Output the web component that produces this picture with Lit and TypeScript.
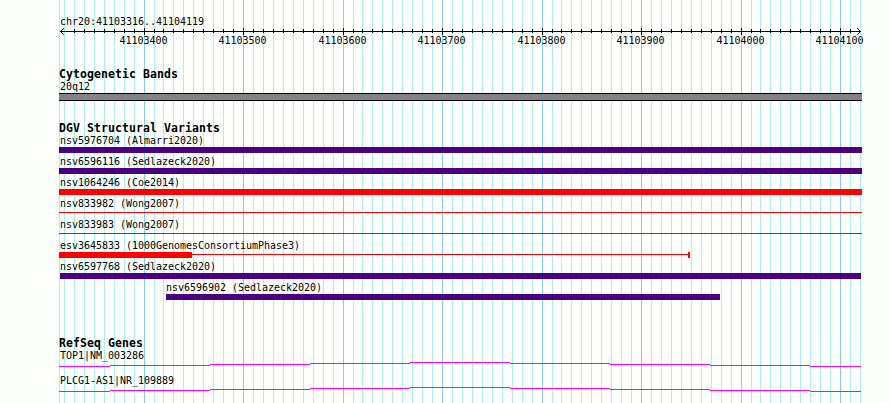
import { LitElement, html, svg, css, nothing } from "lit";
import { customElement, property } from "lit/decorators.js";
import { styleMap } from "lit/directives/style-map.js";

const LEFT = 59;
const WIDTH = 803;
const FIRST_TICK = 64.47;
const TICK_STEP = 9.95;

interface Tick {
  x: number;
  major: boolean;
  label: string;
}

interface Feature {
  name: string;
  start: number;
  end: number;
  kind: "gain" | "loss" | "line" | "partial";
}

const ticks: Tick[] = Array.from({ length: 81 }, (_, k) => {
  const position = 41103320 + k * 10;
  return {
    x: Math.floor(FIRST_TICK + TICK_STEP * k),
    major: position % 100 === 0,
    label: String(position),
  };
});

const variants: Feature[] = [
  { name: "nsv5976704 (Almarri2020)", start: 59, end: 862, kind: "gain" },
  { name: "nsv6596116 (Sedlazeck2020)", start: 59, end: 862, kind: "gain" },
  { name: "nsv1064246 (Coe2014)", start: 59, end: 862, kind: "loss" },
  { name: "nsv833982 (Wong2007)", start: 59, end: 862, kind: "line" },
  { name: "nsv833983 (Wong2007)", start: 59, end: 862, kind: "line" },
  { name: "esv3645833 (1000GenomesConsortiumPhase3)", start: 59, end: 690, kind: "partial" },
  { name: "nsv6597768 (Sedlazeck2020)", start: 60, end: 861, kind: "gain" },
  { name: "nsv6596902 (Sedlazeck2020)", start: 166, end: 720, kind: "gain" },
];

@customElement("genome-grid")
class GenomeGrid extends LitElement {
  static styles = css`
    :host { display: block; }
    svg { display: block; }
    .minor { fill: #afeeee; }
    .major { fill: #87ceeb; }
  `;
  render() {
    return html`<svg width="890" height="403" shape-rendering="crispEdges">
      <rect class="minor" x="59" y="0" width="1" height="403"></rect>
      ${ticks.map((t) => svg`<rect class=${t.major ? "major" : "minor"} x=${t.x} y="0" width="1" height="403"></rect>`)}
    </svg>`;
  }
}

@customElement("genome-ruler")
class GenomeRuler extends LitElement {
  static styles = css`
    :host { display: block; height: 22px; }
    svg { display: block; overflow: visible; }
    rect { fill: #000; }
    path { fill: none; stroke: #000; stroke-width: 1; }
    text { font: 10px "DejaVu Sans Mono", monospace; letter-spacing: -0.02px; fill: #000; }
  `;
  render() {
    return html`<svg width="803" height="22" viewBox="59 26 803 22">
      <g shape-rendering="crispEdges">
        <rect x="60" y="31" width="801" height="1"></rect>
        ${ticks.slice(0, 80).map((t) =>
          t.x < 70 ? nothing : svg`<rect x=${t.x} y=${t.major ? 28 : 29} width="1" height=${t.major ? 7 : 4}></rect>`)}
      </g>
      <path d="M63.8 28.2L60.5 31.5L63.8 34.8M857.2 28.2L860.5 31.5L857.2 34.8"></path>
      ${ticks.filter((t) => t.major).map((t) => svg`<text x=${t.x - 24.5} y="44">${t.label}</text>`)}
    </svg>`;
  }
}

@customElement("variant-row")
class VariantRow extends LitElement {
  @property({ attribute: false }) item!: Feature;
  static styles = css`
    :host { display: block; height: 21px; }
    .name { font: 10px/12px "DejaVu Sans Mono", monospace; letter-spacing: -0.02px; height: 12px; padding-left: 1px; white-space: pre; }
    .bar { height: 6px; display: flex; }
    .gain { background: #4b0082; }
    .loss { background: #f00; }
    .line { height: 1px; margin-top: 2px; background: #f00; }
    .block { width: 133px; background: #f00; }
    .link { flex: 1; height: 1px; margin-top: 2px; background: #f00; }
    .cap { width: 2px; background: #f00; }
  `;
  render() {
    const { name, start, end, kind } = this.item;
    const inset = Math.max(0, start - LEFT - 1);
    return html`
      <div class="name" style=${styleMap({ marginLeft: `${inset}px` })}>${name}</div>
      <div class="bar ${kind}" style=${styleMap({ marginLeft: `${start - LEFT}px`, width: `${end - start}px` })}>
        ${kind === "partial"
          ? html`<div class="block"></div><div class="link"></div><div class="cap"></div>`
          : nothing}
      </div>`;
  }
}

@customElement("gene-row")
class GeneRow extends LitElement {
  @property() name = "";
  static styles = css`
    :host { display: block; height: 25px; }
    .name { font: 10px/12px "DejaVu Sans Mono", monospace; letter-spacing: -0.02px; height: 12px; padding-left: 1px; }
    svg { display: block; }
    rect { fill: #f0f; }
  `;
  render() {
    const edges = [59, 110, 210, 310, 410, 510, 610, 710, 810, 861];
    const levels = [4, 3, 2, 1, 0, 1, 2, 3, 4];
    return html`<div class="name">${this.name}</div>
      <svg width="803" height="5" viewBox="59 0 803 5" shape-rendering="crispEdges">
        ${levels.map((y, i) => svg`<rect x=${edges[i]} y=${y} width=${edges[i + 1] - edges[i]} height="1"></rect>`)}
      </svg>`;
  }
}

@customElement("app-root")
class AppRoot extends LitElement {
  static styles = css`
    :host {
      display: block;
      position: relative;
      width: 890px;
      height: 403px;
      overflow: hidden;
      background: #fdfffc;
      color: #000;
    }
    genome-grid { position: absolute; inset: 0; }
    .tracks {
      position: relative;
      display: flex;
      flex-direction: column;
      width: ${WIDTH}px;
      margin-left: ${LEFT}px;
      padding-top: 16px;
    }
    .label { font: 10px/12px "DejaVu Sans Mono", monospace; letter-spacing: -0.02px; height: 12px; padding-left: 1px; }
    .region { height: 10px; }
    h2 {
      margin: 0;
      height: 13px;
      font: bold 11.5px/12px "DejaVu Sans Mono", monospace;
      letter-spacing: 0.077px;
      white-space: pre;
    }
    .band { height: 6px; border: solid #000; border-width: 1px 0; background: #848284; }
    .cyto { margin-top: 20px; }
    .variants { margin-top: 21px; }
    .genes { margin-top: 34px; }
    .cyto, .variants, .genes { display: flex; flex-direction: column; }
  `;
  render() {
    return html`
      <genome-grid></genome-grid>
      <main class="tracks">
        <div class="label region">chr20:41103316..41104119</div>
        <genome-ruler></genome-ruler>
        <section class="cyto">
          <h2>Cytogenetic Bands</h2>
          <div class="label">20q12</div>
          <div class="band"></div>
        </section>
        <section class="variants">
          <h2>DGV Structural Variants</h2>
          ${variants.map((v) => html`<variant-row .item=${v}></variant-row>`)}
        </section>
        <section class="genes">
          <h2>RefSeq Genes</h2>
          <gene-row name="TOP1|NM_003286"></gene-row>
          <gene-row name="PLCG1-AS1|NR_109889"></gene-row>
        </section>
      </main>`;
  }
}
